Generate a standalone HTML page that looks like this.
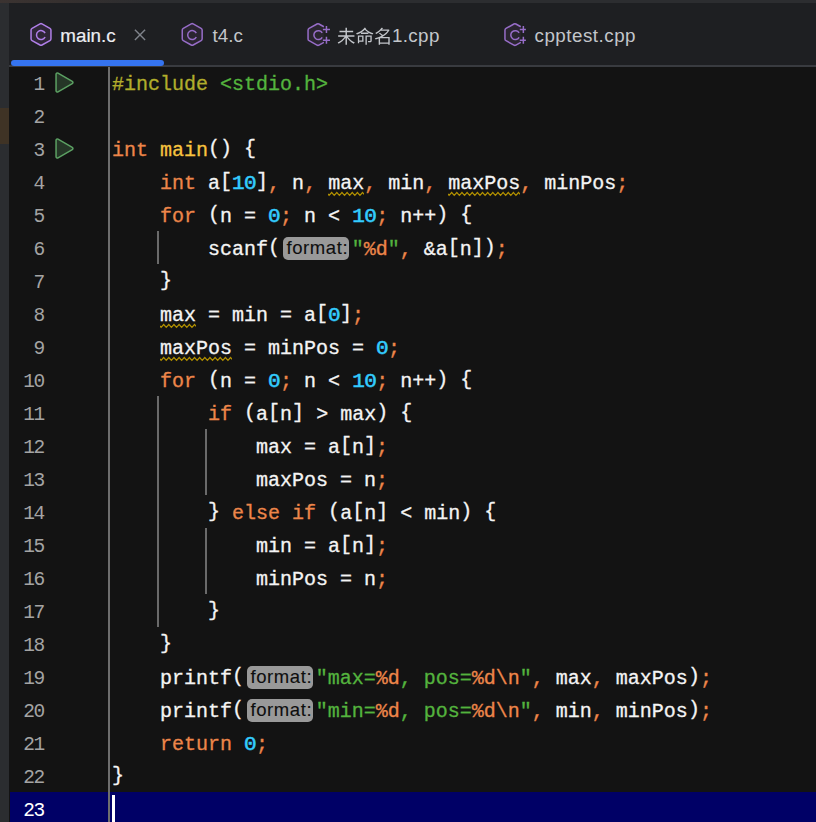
<!DOCTYPE html>
<html lang="zh">
<head>
<meta charset="utf-8">
<title>main.c</title>
<style>
html,body{margin:0;padding:0}
body{width:816px;height:822px;overflow:hidden;position:relative;background:#131313;font-family:"Liberation Sans",sans-serif}
#top{position:absolute;left:0;top:0;width:816px;height:3px;background:linear-gradient(90deg,#3b3331 0,#36302f 60px,#2c2d30 150px)}
#left{position:absolute;left:0;top:3px;width:9px;height:819px;background:#2b2d30}
#left i{position:absolute;left:0;top:105px;width:9px;height:36px;background:#3f3325}
#tabs{position:absolute;left:9px;top:3px;width:807px;height:62px;background:#1e1f22;border-bottom:2px solid #393b40}
#tabs .t{position:absolute;top:20.8px;font-size:18.8px;line-height:24px;color:#c3c6cb;white-space:pre}
#tabs .t.a{color:#eceef2;-webkit-text-stroke:0.2px}
#tabs .cjk{fill:currentColor;vertical-align:-3.7px;margin-right:-0.5px}
#tabs .ico{position:absolute}
#tabs .x{position:absolute;left:125px;top:25px}
#ul{position:absolute;left:2px;top:57px;width:152.5px;height:6px;border-radius:3px;background:#3574f0}
#ed{position:absolute;left:9px;top:67px;width:807px;height:755px;background:#131313}
#gl{position:absolute;left:108px;top:67px;width:2px;height:755px;background:#6e6e6e}
.row{position:absolute;left:10px;width:806px;height:33px}
.row.cur{background:#000066;box-shadow:0 -1px 0 #000066}
.ln{position:absolute;right:772px;top:1.5px;font:19.5px/33px "Liberation Mono",monospace;letter-spacing:-1.3px;color:#a4a4a4}
.cur .ln{color:#fff}
.run{position:absolute;left:40px;top:1px}
.c{position:absolute;left:102px;top:0.6px;font:20px/33px "Liberation Mono",monospace;color:#f4f4f4;white-space:pre;-webkit-text-stroke:0.3px}
.k{color:#ed864a} .f{color:#f7c33f} .n{color:#33ccff;-webkit-text-stroke:0.6px;font-size:21px;letter-spacing:-0.6px;line-height:1} .s{color:#54b33e} .p{color:#b1ad2c}
.c b{font-weight:normal;position:relative;top:-2px}
.w{position:relative}
.wv{position:absolute;left:0;top:19.2px;overflow:hidden}
.h{display:inline-block;box-sizing:border-box;width:66px;height:23px;margin:0 2.7px 0 3px;padding-left:3.4px;border-radius:5px;background:#999;color:#0e0e0e;-webkit-text-stroke:0.1px;
   font:18.5px/21px "Liberation Sans",sans-serif;letter-spacing:.6px;text-align:left;vertical-align:top;position:relative;top:4px;overflow:hidden}
.g{position:absolute;width:2px;background:#6a6a6a}
#caret{position:absolute;left:112px;top:795px;width:3px;height:27px;background:#fff}
</style>
</head>
<body>
<div id="top"></div>
<div id="left"><i></i></div>
<div id="tabs">
<svg class="ico" style="left:18px;top:17px" viewBox="0 0 28 28" width="28" height="28"><g transform="translate(14.00 14.45)"><path d="M-0.97 -10.56 A2.0 2.0 0 0 1 0.97 -10.56 L8.92 -6.12 A2.0 2.0 0 0 1 9.95 -4.38 L9.95 4.38 A2.0 2.0 0 0 1 8.92 6.12 L0.97 10.56 A2.0 2.0 0 0 1 -0.97 10.56 L-8.92 6.12 A2.0 2.0 0 0 1 -9.95 4.38 L-9.95 -4.38 A2.0 2.0 0 0 1 -8.92 -6.12 Z" fill="#2e2636" stroke="#b07fe8" stroke-width="1.5"/><path d="M4.08 -1.3 A4.5 4.5 0 1 0 4.08 2.5" fill="none" stroke="#b07fe8" stroke-width="1.5"/></g></svg><span class="t a" style="left:51.3px">main.c</span>
<svg class="x" viewBox="0 0 12 14" width="12" height="14"><path d="M0.9 1.8 L11.1 12 M11.1 1.8 L0.9 12" stroke="#7f838b" stroke-width="1.4" fill="none"/></svg>
<svg class="ico" style="left:169px;top:17px" viewBox="0 0 28 28" width="28" height="28"><g transform="translate(14.20 14.45)"><path d="M-0.97 -10.56 A2.0 2.0 0 0 1 0.97 -10.56 L8.92 -6.12 A2.0 2.0 0 0 1 9.95 -4.38 L9.95 4.38 A2.0 2.0 0 0 1 8.92 6.12 L0.97 10.56 A2.0 2.0 0 0 1 -0.97 10.56 L-8.92 6.12 A2.0 2.0 0 0 1 -9.95 4.38 L-9.95 -4.38 A2.0 2.0 0 0 1 -8.92 -6.12 Z" fill="#2a2530" stroke="#976dc8" stroke-width="1.5"/><path d="M4.08 -1.3 A4.5 4.5 0 1 0 4.08 2.5" fill="none" stroke="#976dc8" stroke-width="1.5"/></g></svg><span class="t" style="left:203.5px">t4.c</span>
<svg class="ico" style="left:295px;top:17px" viewBox="0 0 28 28" width="28" height="28"><g transform="translate(14.00 14.55)"><path d="M5.90 -7.80 L0.97 -10.55 A2.0 2.0 0 0 0 -0.98 -10.56 L-8.92 -6.12 A2.0 2.0 0 0 0 -9.95 -4.38 L-9.95 4.38 A2.0 2.0 0 0 0 -8.92 6.12 L-0.98 10.56 A2.0 2.0 0 0 0 0.97 10.55 L5.90 7.80" fill="#2a2530" stroke="#976dc8" stroke-width="1.5"/><path d="M4.2 -1.67 A4.45 4.45 0 1 0 4.2 2.77" fill="none" stroke="#976dc8" stroke-width="1.5"/><path d="M4.9 -5 H12.0 M8.45 -8.5 V-1.5 M4.9 5.75 H12.0 M8.45 2.25 V9.25" fill="none" stroke="#976dc8" stroke-width="1.5"/></g></svg><span class="t" style="left:328px;letter-spacing:.35px"><svg class="cjk" role="img" aria-label="未命名" width="55.5" height="18.5" viewBox="0 -880 3000 1000"><path transform="translate(0 0) scale(1 -1)" d="M459 839V676H133V602H459V429H62V355H416C326 226 174 101 34 39C51 24 76 -5 89 -24C221 44 362 163 459 296V-80H538V300C636 166 778 42 911 -25C924 -5 949 25 966 40C826 101 673 226 581 355H942V429H538V602H874V676H538V839Z"/><path transform="translate(1000 0) scale(1 -1)" d="M505 852C411 718 219 591 34 542C50 522 68 491 78 469C151 493 226 529 296 571V508H696V575C765 532 839 497 911 474C924 496 948 529 967 546C808 586 638 683 547 786L565 809ZM304 576C378 622 447 677 503 735C555 677 621 622 694 576ZM128 425V-3H197V82H433V425ZM197 358H362V149H197ZM539 425V-81H612V357H804V143C804 131 800 127 786 126C772 126 724 126 668 127C677 106 687 78 690 57C766 57 813 57 841 69C870 82 877 103 877 143V425Z"/><path transform="translate(2000 0) scale(1 -1)" d="M263 529C314 494 373 446 417 406C300 344 171 299 47 273C61 256 79 224 86 204C141 217 197 233 252 253V-79H327V-27H773V-79H849V340H451C617 429 762 553 844 713L794 744L781 740H427C451 768 473 797 492 826L406 843C347 747 233 636 69 559C87 546 111 519 122 501C217 550 296 609 361 671H733C674 583 587 508 487 445C440 486 374 536 321 572ZM773 42H327V271H773Z"/></svg>1.cpp</span>
<svg class="ico" style="left:491px;top:17px" viewBox="0 0 28 28" width="28" height="28"><g transform="translate(14.90 14.55)"><path d="M5.90 -7.80 L0.97 -10.55 A2.0 2.0 0 0 0 -0.98 -10.56 L-8.92 -6.12 A2.0 2.0 0 0 0 -9.95 -4.38 L-9.95 4.38 A2.0 2.0 0 0 0 -8.92 6.12 L-0.98 10.56 A2.0 2.0 0 0 0 0.97 10.55 L5.90 7.80" fill="#2a2530" stroke="#976dc8" stroke-width="1.5"/><path d="M4.2 -1.67 A4.45 4.45 0 1 0 4.2 2.77" fill="none" stroke="#976dc8" stroke-width="1.5"/><path d="M4.9 -5 H11.0 M8.45 -8.5 V-1.5 M4.9 5.75 H11.0 M8.45 2.25 V9.25" fill="none" stroke="#976dc8" stroke-width="1.5"/></g></svg><span class="t" style="left:525.5px;letter-spacing:.5px">cpptest.cpp</span>
<div id="ul"></div>
</div>
<div id="ed"></div>
<div class="row" style="top:67px"><span class="ln">1</span><svg class="run" viewBox="0 0 28 31" width="28" height="31"><path d="M6.05 6.25 A1.3 1.3 0 0 1 8.00 5.13 L22.29 13.37 A1.3 1.3 0 0 1 22.29 15.63 L8.00 23.87 A1.3 1.3 0 0 1 6.05 22.75 Z" fill="#253627" stroke="#5ca163" stroke-width="1.5"/></svg><span class="c"><span class="p">#include</span> <span class="s">&lt;stdio.h&gt;</span></span></div>
<div class="row" style="top:100px"><span class="ln">2</span><span class="c"></span></div>
<div class="row" style="top:133px"><span class="ln">3</span><svg class="run" viewBox="0 0 28 31" width="28" height="31"><path d="M6.05 6.25 A1.3 1.3 0 0 1 8.00 5.13 L22.29 13.37 A1.3 1.3 0 0 1 22.29 15.63 L8.00 23.87 A1.3 1.3 0 0 1 6.05 22.75 Z" fill="#253627" stroke="#5ca163" stroke-width="1.5"/></svg><span class="c"><span class="k">int</span> <span class="f">main</span><b>()</b> <b>{</b></span></div>
<div class="row" style="top:166px"><span class="ln">4</span><span class="c">    <span class="k">int</span> a<b>[</b><span class="n">10</span><b>]</b><span class="k">,</span> n<span class="k">,</span> <span class="w">max<svg class="wv" width="36" height="6" viewBox="0 0 36 6"><path d="M-4.04 4.4 L-1.47 1.5 L1.10 4.4 L3.67 1.5 L6.24 4.4 L8.81 1.5 L11.39 4.4 L13.96 1.5 L16.53 4.4 L19.10 1.5 L21.67 4.4 L24.24 1.5 L26.81 4.4 L29.39 1.5 L31.96 4.4 L34.53 1.5 L37.10 4.4 L39.67 1.5" fill="none" stroke="#b08f00" stroke-width="1.2"/></svg></span><span class="k">,</span> min<span class="k">,</span> <span class="w">maxPos<svg class="wv" width="72" height="6" viewBox="0 0 72 6"><path d="M-4.04 4.4 L-1.47 1.5 L1.10 4.4 L3.67 1.5 L6.24 4.4 L8.81 1.5 L11.39 4.4 L13.96 1.5 L16.53 4.4 L19.10 1.5 L21.67 4.4 L24.24 1.5 L26.81 4.4 L29.39 1.5 L31.96 4.4 L34.53 1.5 L37.10 4.4 L39.67 1.5 L42.24 4.4 L44.81 1.5 L47.39 4.4 L49.96 1.5 L52.53 4.4 L55.10 1.5 L57.67 4.4 L60.24 1.5 L62.81 4.4 L65.39 1.5 L67.96 4.4 L70.53 1.5 L73.10 4.4 L75.67 1.5" fill="none" stroke="#b08f00" stroke-width="1.2"/></svg></span><span class="k">,</span> minPos<span class="k">;</span></span></div>
<div class="row" style="top:199px"><span class="ln">5</span><span class="c">    <span class="k">for</span> <b>(</b>n = <span class="n">0</span><span class="k">;</span> n &lt; <span class="n">10</span><span class="k">;</span> n++<b>)</b> <b>{</b></span></div>
<div class="row" style="top:232px"><span class="ln">6</span><span class="c">        scanf<b>(</b><span class="h">format:</span><span class="s">"</span><span class="k">%d</span><span class="s">"</span><span class="k">,</span> &amp;a<b>[</b>n<b>])</b><span class="k">;</span></span></div>
<div class="row" style="top:265px"><span class="ln">7</span><span class="c">    <b>}</b></span></div>
<div class="row" style="top:298px"><span class="ln">8</span><span class="c">    <span class="w">max<svg class="wv" width="36" height="6" viewBox="0 0 36 6"><path d="M-4.04 4.4 L-1.47 1.5 L1.10 4.4 L3.67 1.5 L6.24 4.4 L8.81 1.5 L11.39 4.4 L13.96 1.5 L16.53 4.4 L19.10 1.5 L21.67 4.4 L24.24 1.5 L26.81 4.4 L29.39 1.5 L31.96 4.4 L34.53 1.5 L37.10 4.4 L39.67 1.5" fill="none" stroke="#b08f00" stroke-width="1.2"/></svg></span> = min = a<b>[</b><span class="n">0</span><b>]</b><span class="k">;</span></span></div>
<div class="row" style="top:331px"><span class="ln">9</span><span class="c">    <span class="w">maxPos<svg class="wv" width="72" height="6" viewBox="0 0 72 6"><path d="M-4.04 4.4 L-1.47 1.5 L1.10 4.4 L3.67 1.5 L6.24 4.4 L8.81 1.5 L11.39 4.4 L13.96 1.5 L16.53 4.4 L19.10 1.5 L21.67 4.4 L24.24 1.5 L26.81 4.4 L29.39 1.5 L31.96 4.4 L34.53 1.5 L37.10 4.4 L39.67 1.5 L42.24 4.4 L44.81 1.5 L47.39 4.4 L49.96 1.5 L52.53 4.4 L55.10 1.5 L57.67 4.4 L60.24 1.5 L62.81 4.4 L65.39 1.5 L67.96 4.4 L70.53 1.5 L73.10 4.4 L75.67 1.5" fill="none" stroke="#b08f00" stroke-width="1.2"/></svg></span> = minPos = <span class="n">0</span><span class="k">;</span></span></div>
<div class="row" style="top:364px"><span class="ln">10</span><span class="c">    <span class="k">for</span> <b>(</b>n = <span class="n">0</span><span class="k">;</span> n &lt; <span class="n">10</span><span class="k">;</span> n++<b>)</b> <b>{</b></span></div>
<div class="row" style="top:397px"><span class="ln">11</span><span class="c">        <span class="k">if</span> <b>(</b>a<b>[</b>n<b>]</b> &gt; max<b>)</b> <b>{</b></span></div>
<div class="row" style="top:430px"><span class="ln">12</span><span class="c">            max = a<b>[</b>n<b>]</b><span class="k">;</span></span></div>
<div class="row" style="top:463px"><span class="ln">13</span><span class="c">            maxPos = n<span class="k">;</span></span></div>
<div class="row" style="top:496px"><span class="ln">14</span><span class="c">        <b>}</b> <span class="k">else</span> <span class="k">if</span> <b>(</b>a<b>[</b>n<b>]</b> &lt; min<b>)</b> <b>{</b></span></div>
<div class="row" style="top:529px"><span class="ln">15</span><span class="c">            min = a<b>[</b>n<b>]</b><span class="k">;</span></span></div>
<div class="row" style="top:562px"><span class="ln">16</span><span class="c">            minPos = n<span class="k">;</span></span></div>
<div class="row" style="top:595px"><span class="ln">17</span><span class="c">        <b>}</b></span></div>
<div class="row" style="top:628px"><span class="ln">18</span><span class="c">    <b>}</b></span></div>
<div class="row" style="top:661px"><span class="ln">19</span><span class="c">    printf<b>(</b><span class="h">format:</span><span class="s">"max=</span><span class="k">%d</span><span class="s">, pos=</span><span class="k">%d\n</span><span class="s">"</span><span class="k">,</span> max<span class="k">,</span> maxPos<b>)</b><span class="k">;</span></span></div>
<div class="row" style="top:694px"><span class="ln">20</span><span class="c">    printf<b>(</b><span class="h">format:</span><span class="s">"min=</span><span class="k">%d</span><span class="s">, pos=</span><span class="k">%d\n</span><span class="s">"</span><span class="k">,</span> min<span class="k">,</span> minPos<b>)</b><span class="k">;</span></span></div>
<div class="row" style="top:727px"><span class="ln">21</span><span class="c">    <span class="k">return</span> <span class="n">0</span><span class="k">;</span></span></div>
<div class="row" style="top:760px"><span class="ln">22</span><span class="c"><b>}</b></span></div>
<div class="row cur" style="top:793px"><span class="ln">23</span><span class="c"></span></div>
<div id="gl"></div>
<div class="g" style="left:157px;top:231px;height:33px"></div>
<div class="g" style="left:157px;top:396px;height:231px"></div>
<div class="g" style="left:205px;top:429px;height:66px"></div>
<div class="g" style="left:205px;top:528px;height:66px"></div>
<div id="caret"></div>
</body>
</html>
